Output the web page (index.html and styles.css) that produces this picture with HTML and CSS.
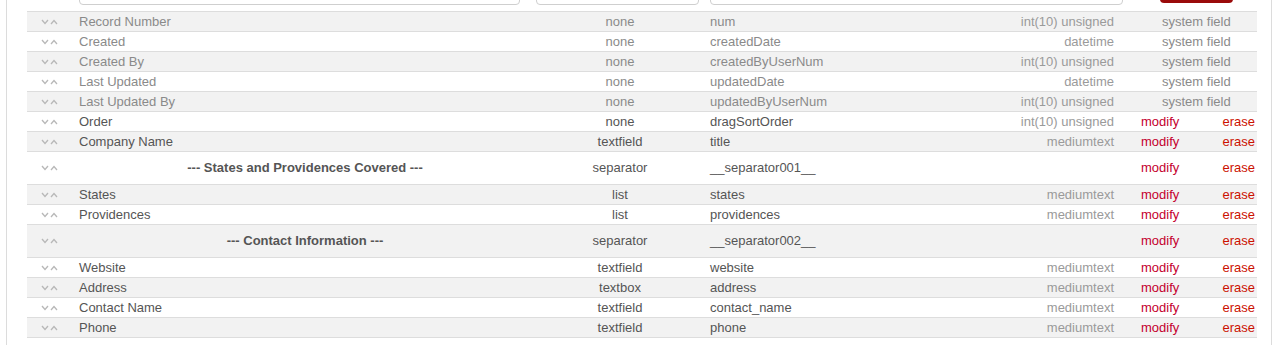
FILE: index.html
```html
<!DOCTYPE html>
<html>
<head>
<meta charset="utf-8">
<link rel="stylesheet" href="styles.css">
</head>
<body>
<div class="panel">
  <div class="filters">
    <div class="inp inp-label"></div>
    <div class="inp inp-type"></div>
    <div class="inp inp-field"></div>
    <div class="btn"></div>
  </div>
  <svg width="0" height="0" class="defs">
    <symbol id="ud" viewBox="0 0 18 6">
      <polyline points="1,1 4,4.5 7,1" fill="none" stroke="#b8b8b8" stroke-width="1.3"/>
      <polyline points="10,5 13,1.5 16,5" fill="none" stroke="#b8b8b8" stroke-width="1.3"/>
    </symbol>
  </svg>
  <div class="table">
    <div class="row alt sys"><div class="c-ico"><svg class="ico"><use href="#ud"/></svg></div><div class="c-label">Record Number</div><div class="c-type">none</div><div class="c-field">num</div><div class="c-dt">int(10) unsigned</div><div class="c-sys">system field</div></div>
    <div class="row sys"><div class="c-ico"><svg class="ico"><use href="#ud"/></svg></div><div class="c-label">Created</div><div class="c-type">none</div><div class="c-field">createdDate</div><div class="c-dt">datetime</div><div class="c-sys">system field</div></div>
    <div class="row alt sys"><div class="c-ico"><svg class="ico"><use href="#ud"/></svg></div><div class="c-label">Created By</div><div class="c-type">none</div><div class="c-field">createdByUserNum</div><div class="c-dt">int(10) unsigned</div><div class="c-sys">system field</div></div>
    <div class="row sys"><div class="c-ico"><svg class="ico"><use href="#ud"/></svg></div><div class="c-label">Last Updated</div><div class="c-type">none</div><div class="c-field">updatedDate</div><div class="c-dt">datetime</div><div class="c-sys">system field</div></div>
    <div class="row alt sys"><div class="c-ico"><svg class="ico"><use href="#ud"/></svg></div><div class="c-label">Last Updated By</div><div class="c-type">none</div><div class="c-field">updatedByUserNum</div><div class="c-dt">int(10) unsigned</div><div class="c-sys">system field</div></div>
    <div class="row"><div class="c-ico"><svg class="ico"><use href="#ud"/></svg></div><div class="c-label">Order</div><div class="c-type">none</div><div class="c-field">dragSortOrder</div><div class="c-dt">int(10) unsigned</div><div class="c-mod">modify</div><div class="c-era">erase</div></div>
    <div class="row alt"><div class="c-ico"><svg class="ico"><use href="#ud"/></svg></div><div class="c-label">Company Name</div><div class="c-type">textfield</div><div class="c-field">title</div><div class="c-dt">mediumtext</div><div class="c-mod">modify</div><div class="c-era">erase</div></div>
    <div class="row sep"><div class="c-ico"><svg class="ico"><use href="#ud"/></svg></div><div class="c-label">--- States and Providences Covered ---</div><div class="c-type">separator</div><div class="c-field">__separator001__</div><div class="c-dt"></div><div class="c-mod">modify</div><div class="c-era">erase</div></div>
    <div class="row alt"><div class="c-ico"><svg class="ico"><use href="#ud"/></svg></div><div class="c-label">States</div><div class="c-type">list</div><div class="c-field">states</div><div class="c-dt">mediumtext</div><div class="c-mod">modify</div><div class="c-era">erase</div></div>
    <div class="row"><div class="c-ico"><svg class="ico"><use href="#ud"/></svg></div><div class="c-label">Providences</div><div class="c-type">list</div><div class="c-field">providences</div><div class="c-dt">mediumtext</div><div class="c-mod">modify</div><div class="c-era">erase</div></div>
    <div class="row alt sep"><div class="c-ico"><svg class="ico"><use href="#ud"/></svg></div><div class="c-label">--- Contact Information ---</div><div class="c-type">separator</div><div class="c-field">__separator002__</div><div class="c-dt"></div><div class="c-mod">modify</div><div class="c-era">erase</div></div>
    <div class="row"><div class="c-ico"><svg class="ico"><use href="#ud"/></svg></div><div class="c-label">Website</div><div class="c-type">textfield</div><div class="c-field">website</div><div class="c-dt">mediumtext</div><div class="c-mod">modify</div><div class="c-era">erase</div></div>
    <div class="row alt"><div class="c-ico"><svg class="ico"><use href="#ud"/></svg></div><div class="c-label">Address</div><div class="c-type">textbox</div><div class="c-field">address</div><div class="c-dt">mediumtext</div><div class="c-mod">modify</div><div class="c-era">erase</div></div>
    <div class="row"><div class="c-ico"><svg class="ico"><use href="#ud"/></svg></div><div class="c-label">Contact Name</div><div class="c-type">textfield</div><div class="c-field">contact_name</div><div class="c-dt">mediumtext</div><div class="c-mod">modify</div><div class="c-era">erase</div></div>
    <div class="row alt last"><div class="c-ico"><svg class="ico"><use href="#ud"/></svg></div><div class="c-label">Phone</div><div class="c-type">textfield</div><div class="c-field">phone</div><div class="c-dt">mediumtext</div><div class="c-mod">modify</div><div class="c-era">erase</div></div>
  </div>
</div>
</body>
</html>
```
FILE: styles.css
```css
html, body {
  margin: 0;
  padding: 0;
  background: #fff;
}
body {
  font-family: "Liberation Sans", Arial, sans-serif;
  font-size: 13px;
  color: #555;
}
.panel {
  margin-left: 6px;
  width: 1266px;
  box-sizing: border-box;
  height: 345px;
  border-left: 1px solid #dcdcdc;
  border-right: 1px solid #dcdcdc;
  padding-left: 20px;
}
.defs {
  position: absolute;
}
.filters {
  height: 5px;
  display: flex;
  align-items: flex-end;
  padding-left: 52px;
}
.inp {
  flex: none;
  height: 28px;
  box-sizing: border-box;
  border: 1px solid #cfcfcf;
  border-radius: 4px;
  background: #fff;
}
.inp-label { width: 441px; }
.inp-type { width: 163px; margin-left: 16px; }
.inp-field { width: 413px; margin-left: 11px; }
.btn {
  flex: none;
  width: 73px;
  height: 26px;
  margin-left: 37px;
  margin-bottom: 2px;
  background: #9a0a0a;
  border-radius: 4px;
}
.table {
  margin-top: 6px;
  width: 1230px;
}
.row {
  display: grid;
  grid-template-columns: 43px 470px 160px 260px 164px 76px 57px;
  height: 20px;
  box-sizing: border-box;
  border-top: 1px solid #dddddd;
  align-items: center;
  line-height: 19px;
  background: #fff;
}
.row.alt {
  background: #f2f2f2;
}
.row.last {
  border-bottom: 1px solid #dddddd;
  height: 21px;
}
.row.sep {
  height: 33px;
  padding-bottom: 1px;
}
.c-ico {
  padding-left: 14px;
  display: flex;
  align-items: center;
}
.ico {
  width: 18px;
  height: 6px;
  display: block;
}
.c-label {
  padding-left: 9px;
  white-space: nowrap;
}
.sep .c-label {
  padding-left: 0;
  text-align: center;
  font-weight: bold;
}
.c-type {
  text-align: center;
}
.c-field {
  padding-left: 10px;
  white-space: nowrap;
}
.c-dt {
  text-align: right;
  padding-right: 10px;
  color: #9a9a9a;
  white-space: nowrap;
}
.c-mod {
  padding-left: 17px;
  color: #c4002e;
}
.c-era {
  text-align: right;
  padding-right: 2px;
  color: #cc1100;
}
.c-sys {
  grid-column: span 2;
  padding-left: 38px;
  color: #8a8a8a;
}
.sys .c-label,
.sys .c-type,
.sys .c-field {
  color: #8a8a8a;
}
```
